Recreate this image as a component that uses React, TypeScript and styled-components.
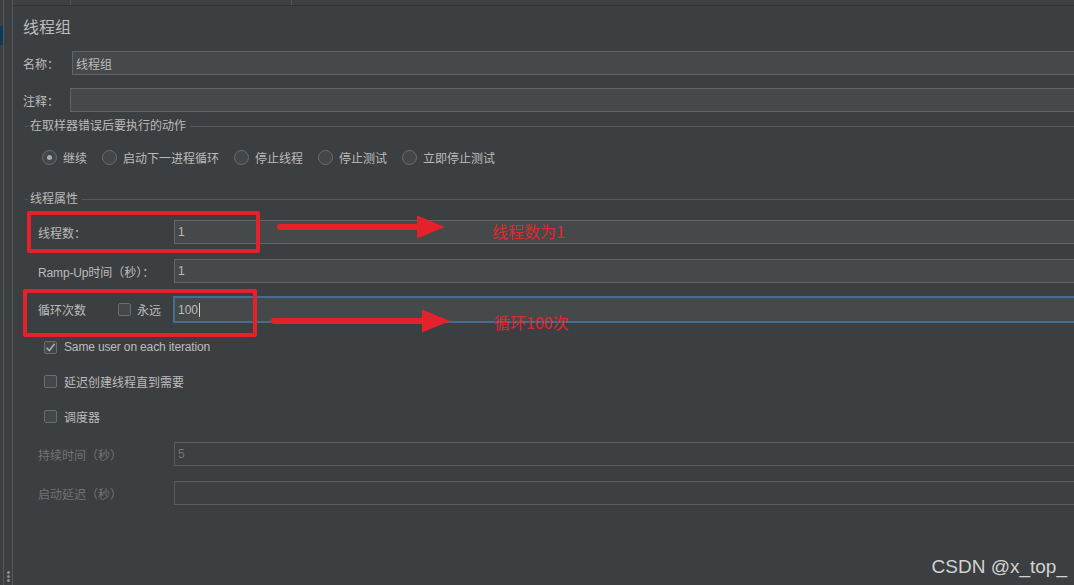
import * as React from 'react';
import styled, { createGlobalStyle } from 'styled-components';

const GlobalStyle = createGlobalStyle`
  html, body {
    margin: 0;
    padding: 0;
    background: #3c3f41;
  }
  body {
    font-family: "Liberation Sans", "Noto Sans CJK SC", sans-serif;
  }
`;

const Page = styled.div`
  position: relative;
  display: flex;
  width: 1074px;
  height: 585px;
  overflow: hidden;
  background: #3c3f41;
  color: #bbbbbb;
  font-size: 12px;
`;

const SideStrip = styled.div`
  display: flex;
  flex-shrink: 0;
  width: 12px;
  border-right: 1px solid #55585b;
`;

const Rail = styled.div`
  flex-shrink: 0;
  width: 3px;
  border-right: 1px solid #55585b;
`;

const RailMark = styled.div`
  margin-top: 26px;
  height: 19px;
  background: #0d3a5a;
`;

const Grip = styled.div`
  flex: 1;
  display: flex;
  flex-direction: column;
  justify-content: flex-end;
  align-items: center;
  gap: 1px;
  padding-bottom: 3px;
`;

const GripDot = styled.span`
  width: 3px;
  height: 3px;
  border-radius: 50%;
  background: #8d8f91;
`;

const Main = styled.div`
  flex: 1;
  display: flex;
  flex-direction: column;
  min-width: 0;
`;

const TabBar = styled.div`
  display: flex;
  height: 5px;
  background: #3e4143;
  border-bottom: 1px solid #313335;
`;

const TabStub = styled.div<{ $w: number }>`
  flex-shrink: 0;
  width: ${(p) => p.$w}px;
  border-right: 1px solid #505356;
`;

const Content = styled.div`
  display: flex;
  flex-direction: column;
  padding-left: 10px;
`;

const Title = styled.div`
  margin-top: 11px;
  font-size: 16px;
  line-height: 22px;
  color: #bbbbbb;
`;

const Row = styled.div<{ $top: number; $indent?: number }>`
  display: flex;
  align-items: center;
  margin-top: ${(p) => p.$top}px;
  padding-left: ${(p) => p.$indent || 0}px;
`;

const Label = styled.span<{ $w: number; $disabled?: boolean }>`
  flex-shrink: 0;
  width: ${(p) => p.$w}px;
  white-space: nowrap;
  color: ${(p) => (p.$disabled ? '#717375' : '#bbbbbb')};
`;

const Latin = styled.span`
  letter-spacing: -0.15px;
`;

const Field = styled.div<{ $disabled?: boolean; $focus?: boolean }>`
  flex: 1;
  display: flex;
  align-items: center;
  box-sizing: border-box;
  height: ${(p) => (p.$focus ? 27 : 24)}px;
  padding-left: 3px;
  background: ${(p) => (p.$disabled ? '#3d4042' : '#45494a')};
  border: ${(p) => (p.$focus ? '2px solid #466c93' : `1px solid ${p.$disabled ? '#5a5d5f' : '#646464'}`)};
  border-right: none;
  color: ${(p) => (p.$disabled ? '#717375' : '#bbbbbb')};
  white-space: nowrap;
`;

const Caret = styled.span`
  display: inline-block;
  width: 1px;
  height: 14px;
  margin-left: 1px;
  background: #cfcfcf;
`;

const GroupTitle = styled.div<{ $top: number }>`
  display: flex;
  align-items: center;
  margin-top: ${(p) => p.$top}px;
  padding-left: 2px;
  line-height: 16px;

  &::before {
    content: '';
    width: 3px;
    height: 1px;
    margin-right: 2px;
    background: #56595b;
  }

  &::after {
    content: '';
    flex: 1;
    height: 1px;
    margin-left: 4px;
    background: #56595b;
  }
`;

const RadioGroup = styled.div`
  display: flex;
  align-items: center;
  gap: 15px;
  height: 20px;
  margin-top: 13px;
  padding-left: 19px;
`;

const RadioItem = styled.label`
  display: flex;
  align-items: center;
  gap: 6px;
`;

const RadioCircle = styled.span<{ $on?: boolean }>`
  display: flex;
  align-items: center;
  justify-content: center;
  box-sizing: border-box;
  width: 15px;
  height: 15px;
  border-radius: 50%;
  border: 1px solid #6b6e70;
  background: #43474a;

  &::after {
    content: '';
    display: ${(p) => (p.$on ? 'block' : 'none')};
    width: 5px;
    height: 5px;
    border-radius: 50%;
    background: #a9abad;
  }
`;

const CheckItem = styled.label<{ $top: number }>`
  display: flex;
  align-items: center;
  gap: 7px;
  height: 20px;
  margin-top: ${(p) => p.$top}px;
  padding-left: 21px;
`;

const CheckBox = styled.span`
  display: flex;
  align-items: center;
  justify-content: center;
  flex-shrink: 0;
  box-sizing: border-box;
  width: 13px;
  height: 13px;
  border: 1px solid #6b6e70;
  border-radius: 2px;
  background: #43474a;
`;

const InlineCheck = styled.span`
  display: flex;
  align-items: center;
  gap: 6px;
  flex-shrink: 0;
  width: 55px;
`;

const Frame = styled.div<{ $x: number; $y: number; $w: number; $h: number }>`
  position: absolute;
  left: ${(p) => p.$x}px;
  top: ${(p) => p.$y}px;
  width: ${(p) => p.$w}px;
  height: ${(p) => p.$h}px;
  box-sizing: border-box;
  border: 4px solid #e5222b;
  border-radius: 2px;
`;

const ArrowSvg = styled.svg<{ $x: number; $y: number }>`
  position: absolute;
  left: ${(p) => p.$x}px;
  top: ${(p) => p.$y}px;
`;

const Note = styled.span<{ $x: number; $y: number }>`
  position: absolute;
  left: ${(p) => p.$x}px;
  top: ${(p) => p.$y}px;
  font-family: "Noto Sans CJK SC", sans-serif;
  font-size: 16px;
  line-height: 18px;
  color: #e3262e;
  white-space: nowrap;
`;

const Watermark = styled.span`
  position: absolute;
  right: 7px;
  top: 556px;
  font-family: "Liberation Sans", sans-serif;
  font-size: 19px;
  line-height: 22px;
  color: rgba(232, 232, 232, 0.88);
`;

const Arrow: React.FC<{ x: number; y: number; len: number }> = ({ x, y, len }) => (
  <ArrowSvg $x={x} $y={y} width={len} height={24} viewBox={`0 0 ${len} 24`}>
    <line x1={4} y1={12} x2={len - 24} y2={12} stroke='#e5222b' strokeWidth={6} strokeLinecap='round' />
    <polygon points={`${len - 29},0.5 ${len - 1},12 ${len - 29},23.5`} fill='#e5222b' />
  </ArrowSvg>
);

const Tick = () => (
  <svg width='11' height='11' viewBox='0 0 11 11'>
    <polyline points='1.5,5.8 4.3,8.6 9.6,1.8' fill='none' stroke='#a9acae' strokeWidth={1.6} />
  </svg>
);

const radios = ['继续', '启动下一进程循环', '停止线程', '停止测试', '立即停止测试'];

const App: React.FC = () => (
  <>
    <GlobalStyle />
    <Page>
      <SideStrip>
        <Rail>
          <RailMark />
        </Rail>
        <Grip>
          <GripDot />
          <GripDot />
          <GripDot />
        </Grip>
      </SideStrip>
      <Main>
        <TabBar>
          <TabStub $w={57} />
          <TabStub $w={220} />
        </TabBar>
        <Content>
          <Title>线程组</Title>
          <Row $top={12}>
            <Label $w={49}>名称：</Label>
            <Field>线程组</Field>
          </Row>
          <Row $top={13}>
            <Label $w={47}>注释：</Label>
            <Field />
          </Row>

          <GroupTitle $top={6}>在取样器错误后要执行的动作</GroupTitle>
          <RadioGroup>
            {radios.map((r, i) => (
              <RadioItem key={r}>
                <RadioCircle $on={i === 0} />
                {r}
              </RadioItem>
            ))}
          </RadioGroup>

          <GroupTitle $top={24}>线程属性</GroupTitle>
          <Row $top={13} $indent={15}>
            <Label $w={136}>线程数：</Label>
            <Field>1</Field>
          </Row>
          <Row $top={15} $indent={15}>
            <Label $w={136}>
              <Latin>Ramp-Up</Latin>时间（秒）：
            </Label>
            <Field>1</Field>
          </Row>
          <Row $top={13} $indent={15}>
            <Label $w={80}>循环次数</Label>
            <InlineCheck>
              <CheckBox />
              永远
            </InlineCheck>
            <Field $focus>
              100
              <Caret />
            </Field>
          </Row>

          <CheckItem $top={14}>
            <CheckBox>
              <Tick />
            </CheckBox>
            <Latin>Same user on each iteration</Latin>
          </CheckItem>
          <CheckItem $top={14}>
            <CheckBox />
            延迟创建线程直到需要
          </CheckItem>
          <CheckItem $top={15}>
            <CheckBox />
            调度器
          </CheckItem>

          <Row $top={16} $indent={15}>
            <Label $w={136} $disabled>
              持续时间（秒）
            </Label>
            <Field $disabled>5</Field>
          </Row>
          <Row $top={15} $indent={15}>
            <Label $w={136} $disabled>
              启动延迟（秒）
            </Label>
            <Field $disabled />
          </Row>
        </Content>
      </Main>

      <Frame $x={27} $y={211} $w={233} $h={42} />
      <Arrow x={276} y={215} len={170} />
      <Note $x={492} $y={222}>线程数为1</Note>

      <Frame $x={23} $y={289} $w={234} $h={48} />
      <Arrow x={270} y={309} len={181} />
      <Note $x={494} $y={313}>循环100次</Note>

      <Watermark>CSDN @x_top_</Watermark>
    </Page>
  </>
);

export default App;
